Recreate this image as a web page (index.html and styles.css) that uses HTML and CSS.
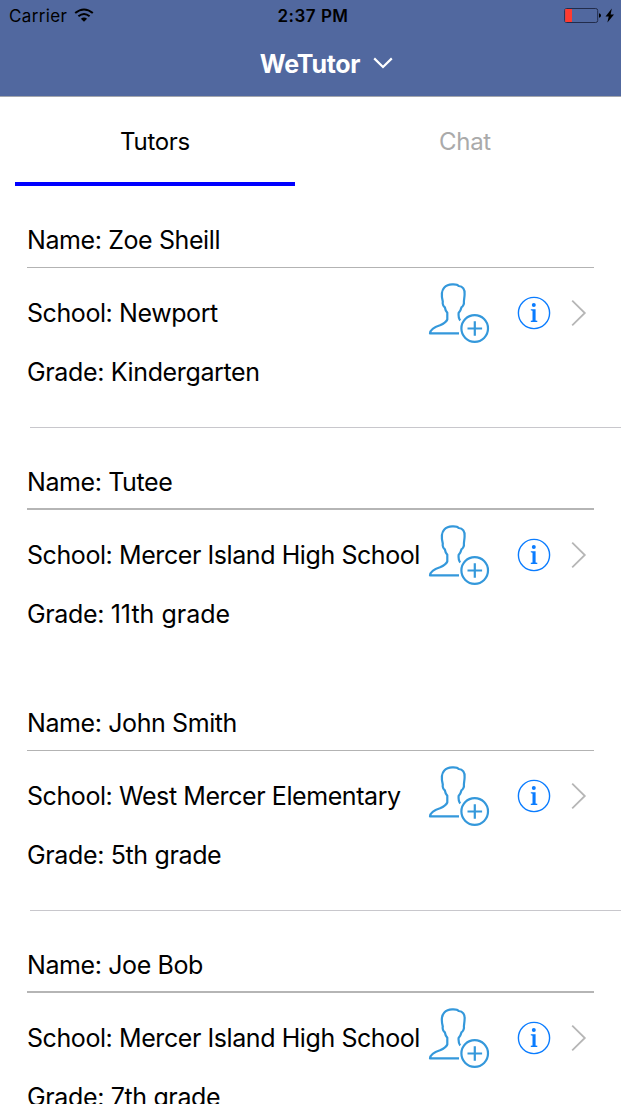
FILE: index.html
```
<!DOCTYPE html>
<html lang="en">
<head>
<meta charset="utf-8">
<title>WeTutor</title>
<link rel="stylesheet" href="styles.css">
</head>
<body>
<svg class="defs" width="0" height="0">
  <symbol id="person" viewBox="0 0 62 62">
    <g fill="none" stroke="#3498db" stroke-width="2.2" stroke-linejoin="round">
      <path d="M31 51.4H2C2.4 47.5 6 45.2 12 43.3C15.5 41.7 18.3 39.9 19.3 37.5V30.8C17.9 29.2 17.2 27.4 16.8 25.2C15.6 24.7 14.2 21.8 14.8 19.6C13.2 13.5 13.7 8.3 16.3 5.5C18.5 3 21.5 2.2 24.6 2.3C27 2.2 29.7 2.5 30.6 4C34.8 4.1 37 7.7 36.6 12C36.6 15 35.9 17.6 35.9 19.6C36.3 22 34.8 24.8 33.5 25.2C33 27.3 32.2 29.2 30.6 30.9C30.4 34 30.7 36.7 32.2 38.4"/>
      <circle cx="46.7" cy="46.5" r="13.3"/>
      <path d="M39.5 46.5h14.6M46.8 39.2v14.6"/>
    </g>
  </symbol>
  <symbol id="info" viewBox="0 0 34 34">
    <circle cx="17" cy="17" r="15.6" fill="none" stroke="#0a7cff" stroke-width="1.4"/>
    <g fill="#0a7cff"><circle cx="16.8" cy="9" r="2"/><path d="M13.8 13.2h4.8v11.2l1.7.4v1.1h-6.5v-1.1l1.7-.4v-9.7l-1.7-.4z"/></g>
  </symbol>
  <symbol id="chevron" viewBox="0 0 16 28">
    <path d="M1.2 1.6 13.8 14 1.2 26.4" fill="none" stroke="#b6b6b6" stroke-width="1.8"/>
  </symbol>
</svg>
<header class="header">
  <div class="status">
    <div class="carrier"><span>Carrier</span>
      <svg class="wifi" width="20" height="14" viewBox="0 0 20 14"><g fill="none" stroke="#000" stroke-width="2"><path d="M1.2 5.1Q10-2.2 18.8 5.1"/><path d="M4.4 8.3Q10 3.6 15.6 8.3"/></g><path d="M6.9 10.7Q10 8.1 13.1 10.7L10 13.8Z"/></svg>
    </div>
    <div class="time">2:37 PM</div>
    <svg class="battery" width="52" height="18" viewBox="0 0 52 18"><rect x=".7" y="2.5" width="33" height="14" rx="2" fill="none" stroke="#222c4b"/><rect x="1.2" y="3" width="6.8" height="13" fill="#ff3b30"/><path d="M35 7.2q2 .2 2 2.3t-2 2.3zM47.8 2.6 41.5 10.5h3.2l-1.3 6L50 8.6h-3.4z"/></svg>
  </div>
  <div class="title"><h1>WeTutor</h1><svg width="20" height="13" viewBox="0 0 20 13"><path d="M1.2 1.4 10 10 18.8 1.4" fill="none" stroke="#fff" stroke-width="2.2"/></svg></div>
</header>
<nav class="tabs"><a class="tab active">Tutors</a><a class="tab">Chat</a></nav>
<main class="list">
  <section class="card divided">
    <div class="name">Name: Zoe Sheill</div>
    <div class="details"><div class="text"><p>School: Newport</p><p class="grade">Grade: Kindergarten</p></div>
      <div class="actions"><svg class="person"><use href="#person"/></svg><svg class="info"><use href="#info"/></svg><svg class="chevron"><use href="#chevron"/></svg></div></div>
  </section>
  <section class="card thick">
    <div class="name">Name: Tutee</div>
    <div class="details"><div class="text"><p>School: Mercer Island High School</p><p class="grade">Grade: <span class="ordinal">11th grade</span></p></div>
      <div class="actions"><svg class="person"><use href="#person"/></svg><svg class="info"><use href="#info"/></svg><svg class="chevron"><use href="#chevron"/></svg></div></div>
  </section>
  <section class="card divided">
    <div class="name">Name: John Smith</div>
    <div class="details"><div class="text"><p>School: West Mercer Elementary</p><p class="grade">Grade: 5th grade</p></div>
      <div class="actions"><svg class="person"><use href="#person"/></svg><svg class="info"><use href="#info"/></svg><svg class="chevron"><use href="#chevron"/></svg></div></div>
  </section>
  <section class="card thick">
    <div class="name">Name: Joe Bob</div>
    <div class="details"><div class="text"><p>School: Mercer Island High School</p><p class="grade">Grade: 7th grade</p></div>
      <div class="actions"><svg class="person"><use href="#person"/></svg><svg class="info"><use href="#info"/></svg><svg class="chevron"><use href="#chevron"/></svg></div></div>
  </section>
</main>
</body>
</html>
```
FILE: styles.css
```
* { box-sizing: border-box; }
body { margin: 0; height: 1104px; overflow: hidden; display: flex; flex-direction: column; background: #fff; color: #000; font-family: Inter, "Liberation Sans", sans-serif; font-size: 25px; }
.defs { display: none; }
h1, p { margin: 0; }
svg { display: block; flex: none; }
.header { height: 97px; flex: none; background: #51689f; border-bottom: 1px solid #a3a6ad; }
.status { height: 32px; display: grid; grid-template-columns: 1fr auto 1fr; align-items: center; padding: 0 5px 0 9px; font-size: 17px; line-height: 32px; }
.carrier { display: flex; align-items: center; gap: 7px; letter-spacing: .35px; }
.wifi { margin-bottom: 2px; }
.time { font-weight: 600; letter-spacing: .5px; padding-left: 1px; }
.battery { justify-self: end; margin-bottom: 3px; }
.title { height: 64px; display: flex; align-items: center; justify-content: center; gap: 13px; padding-left: 32px; color: #fff; }
.title h1 { font-size: 25px; font-weight: 700; line-height: 64px; letter-spacing: -.3px; }
.title svg { margin-bottom: 2px; }
.tabs { height: 89px; flex: none; display: grid; grid-template-columns: 280px 280px; align-items: start; gap: 30px; padding-left: 15px; font-size: 24px; letter-spacing: -.3px; }
.tab { height: 89px; text-align: center; line-height: 89px; color: #aaa; }
.tab.active { color: #000; border-bottom: 4px solid #00f; }
.list { flex: 1; min-height: 0; overflow: hidden; }
.card { height: 242px; }
.card.thick { height: 241px; }
.divided { background: linear-gradient(#c8c7cc, #c8c7cc) 30px 100% / 100% 1px no-repeat; }
.name { height: 82px; margin: 0 27px; padding-top: 34px; line-height: 40px; border-bottom: 1px solid #b3b3b3; letter-spacing: -.4px; }
.thick .name { border-bottom: 2px solid #b5b5b5; }
.details { display: flex; padding-left: 27px; }
.text { width: 401px; padding-top: 25px; white-space: nowrap; letter-spacing: -.42px; }
.text p { line-height: 40px; }
.text .grade { margin-top: 19px; letter-spacing: -.36px; }
.ordinal { letter-spacing: 0; }
.actions { display: flex; align-items: center; height: 62px; margin-top: 14px; }
.person { width: 62px; height: 62px; }
.info { width: 34px; height: 34px; margin-left: 27px; }
.chevron { width: 16px; height: 28px; margin-left: 20px; }
```
